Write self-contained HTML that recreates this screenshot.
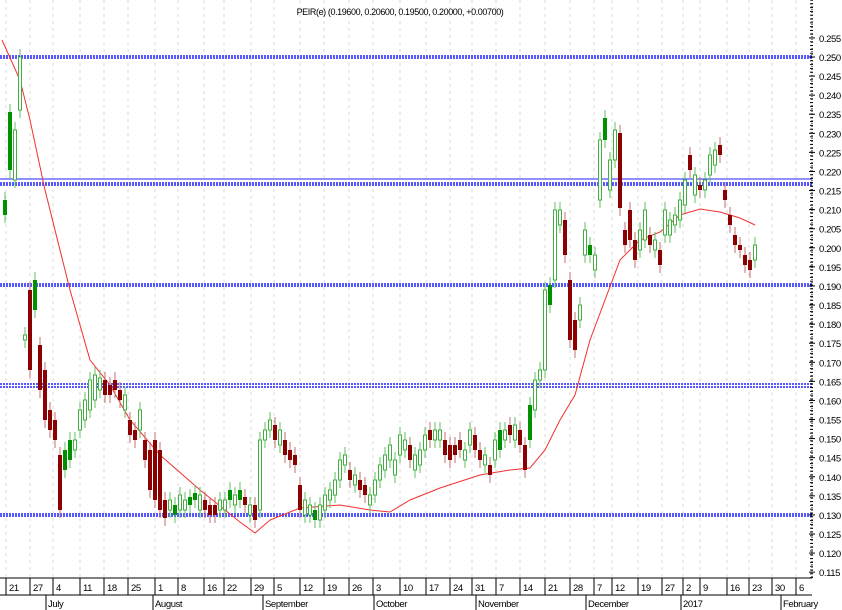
<!DOCTYPE html>
<html><head><meta charset="utf-8"><style>
html,body{margin:0;padding:0;background:#fff;width:842px;height:610px;overflow:hidden}
svg{display:block}
text{font-family:"Liberation Sans",sans-serif;font-size:9.5px;letter-spacing:-0.4px;fill:#000}
</style></head><body>
<svg id="s" width="842" height="610" viewBox="0 0 842 610" xmlns="http://www.w3.org/2000/svg">
<rect width="842" height="610" fill="#fff"/>
<g id="grid"></g>
<g id="hl"></g>
<polyline fill="none" stroke="#f23030" stroke-width="1" points="2,40 20,80 30,120 45,190 60,250 70,290 90,360 110,385 130,420 160,455 200,490 240,522 255,533 270,520 300,508 340,505 370,510 390,512 410,500 440,488 480,475 510,470 530,468 545,450 560,420 575,395 590,340 605,300 620,260 640,240 660,232 680,215 700,209 720,212 740,218 755,225"/>
<g id="c"></g>
<g id="ax"></g>
<text x="400" y="15" text-anchor="middle" style="font-size:9px">PEIR(e) (0.19600, 0.20600, 0.19500, 0.20000, +0.00700)</text>
</svg>
<script>
var NS="http://www.w3.org/2000/svg";
function el(p,n,a,t){var e=document.createElementNS(NS,n);for(var k in a)e.setAttribute(k,a[k]);if(t!==undefined)e.textContent=t;document.getElementById(p).appendChild(e);return e;}
var ticks=[[6,"21"],[30,"27"],[53,"4"],[80,"11"],[104,"18"],[128,"25"],[155,"1"],[178,"8"],[204,"16"],[224,"22"],[251,"29"],[274,"5"],[300,"12"],[324,"19"],[349,"26"],[373,"3"],[400,"10"],[426,"17"],[450,"24"],[472,"31"],[496,"7"],[520,"14"],[545,"21"],[570,"28"],[594,"7"],[612,"12"],[638,"19"],[662,"27"],[683,"2"],[700,"9"],[727,"16"],[749,"23"],[772,"30"],[796,"6"]];
ticks.forEach(function(t){el("grid","line",{x1:t[0],y1:0,x2:t[0],y2:578,stroke:"#d8d8d8","stroke-dasharray":"3,4"});
el("ax","line",{x1:t[0],y1:578,x2:t[0],y2:595,stroke:"#000"});
el("ax","text",{x:t[0]+3,y:591},t[1]);});
el("ax","line",{x1:0,y1:578,x2:812,y2:578,stroke:"#000"});
el("ax","line",{x1:0,y1:595,x2:812,y2:595,stroke:"#000"});
[[48,"July"],[155,"August"],[265,"September"],[376,"October"],[478,"November"],[588,"December"],[683,"2017"],[783,"February"]].forEach(function(m){el("ax","line",{x1:m[0]-2,y1:595,x2:m[0]-2,y2:610,stroke:"#000"});el("ax","text",{x:m[0],y:607},m[1]);});
el("ax","line",{x1:812,y1:0,x2:812,y2:578,stroke:"#000","stroke-dasharray":"1,2"});
for(var i=0;i<=28;i++){var v=0.255-i*0.005,y=57-19.08+i*19.08;el("ax","line",{x1:809,y1:y,x2:815,y2:y,stroke:"#000"});el("ax","text",{x:819,y:y+4},v.toFixed(3));}
for(var y=0;y<578;y+=3.8)el("ax","line",{x1:810,y1:y,x2:813,y2:y,stroke:"#000"});
function hd(y){el("hl","line",{x1:0,y1:y,x2:812,y2:y,stroke:"#2020ff","stroke-width":1.5,"stroke-dasharray":"2,1"});}
hd(56);hd(58);el("hl","line",{x1:0,y1:179,x2:812,y2:179,stroke:"#2020ff"});hd(183);hd(185);
hd(284);hd(286);hd(384);hd(387);hd(514);hd(516);
var d=[[5,200,215,'g'],[10,112,170,'g'],[15,130,180,'h'],[20,57,110,'h'],[25,335,340,'h'],[30,290,370,'r'],[35,280,310,'g'],[40,345,390,'r'],[45,370,420,'r'],[50,410,430,'r'],[55,420,440,'r'],[60,455,510,'r'],[65,450,470,'g'],[70,440,460,'g'],[75,440,450,'h'],[80,410,430,'h'],[85,400,420,'h'],[90,380,410,'h'],[95,375,400,'h'],[100,378,390,'h'],[105,380,395,'r'],[110,385,395,'r'],[115,380,390,'r'],[120,390,400,'r'],[125,395,410,'h'],[130,420,435,'r'],[135,430,440,'r'],[140,410,430,'h'],[145,440,460,'r'],[150,450,490,'r'],[155,440,500,'r'],[160,450,510,'r'],[165,500,518,'r'],[170,500,510,'h'],[175,505,515,'g'],[180,495,510,'h'],[185,500,510,'h'],[190,497,505,'g'],[195,493,500,'g'],[200,495,510,'h'],[205,500,510,'r'],[210,505,515,'r'],[215,505,515,'r'],[220,500,510,'h'],[225,500,510,'h'],[230,490,500,'g'],[235,495,505,'h'],[240,490,500,'g'],[245,497,505,'r'],[250,505,515,'h'],[255,505,520,'r'],[260,440,510,'h'],[265,430,440,'h'],[270,420,430,'h'],[275,425,440,'r'],[280,430,445,'h'],[285,440,455,'r'],[290,450,460,'r'],[295,455,465,'r'],[300,485,510,'r'],[305,500,515,'h'],[310,505,515,'h'],[315,510,520,'g'],[320,505,520,'h'],[325,495,510,'h'],[330,490,500,'h'],[335,480,495,'h'],[340,460,480,'h'],[345,455,465,'h'],[350,470,480,'r'],[355,475,485,'h'],[360,480,490,'r'],[365,485,495,'r'],[370,495,505,'h'],[375,480,495,'h'],[380,465,480,'h'],[385,455,470,'h'],[390,445,460,'h'],[395,460,475,'h'],[400,435,455,'h'],[405,440,450,'h'],[410,445,460,'r'],[415,455,470,'h'],[420,450,465,'h'],[425,435,450,'h'],[430,430,440,'r'],[435,430,440,'h'],[440,430,440,'h'],[445,440,455,'r'],[450,445,460,'r'],[455,445,455,'r'],[460,440,450,'r'],[465,450,460,'h'],[470,430,445,'h'],[475,435,450,'r'],[480,450,460,'r'],[485,455,465,'h'],[490,465,475,'r'],[495,440,460,'h'],[500,430,450,'g'],[505,430,440,'h'],[510,425,435,'r'],[515,425,440,'h'],[520,430,445,'r'],[525,445,470,'r'],[530,405,440,'g'],[535,380,410,'h'],[540,370,380,'h'],[545,290,370,'h'],[550,285,305,'g'],[555,210,280,'h'],[560,210,225,'h'],[565,220,255,'r'],[570,280,340,'r'],[575,320,350,'r'],[580,305,320,'h'],[585,230,255,'h'],[590,245,255,'g'],[595,255,270,'h'],[600,140,200,'h'],[605,118,140,'g'],[610,160,190,'h'],[615,130,160,'h'],[620,133,208,'r'],[625,230,245,'r'],[630,210,240,'r'],[635,240,260,'r'],[640,230,250,'h'],[645,210,240,'h'],[650,235,245,'r'],[655,240,250,'h'],[660,250,265,'r'],[665,210,235,'h'],[670,220,235,'h'],[675,215,225,'h'],[680,200,220,'h'],[685,180,205,'h'],[690,155,170,'r'],[695,175,195,'h'],[700,185,190,'r'],[705,180,190,'h'],[710,155,175,'h'],[715,150,165,'h'],[720,145,155,'r'],[725,190,200,'r'],[730,215,225,'r'],[735,235,245,'r'],[740,245,250,'r'],[745,255,265,'r'],[750,260,270,'r'],[755,245,260,'h']];
d.forEach(function(c){var x=c[0],t=c[1],b=c[2],k=c[3];
var wc=k=='r'?'#c07070':'#60c060';
el("c","line",{x1:x,y1:t-8,x2:x,y2:b+8,stroke:wc});
if(k=='r')el("c","rect",{x:x-2,y:t,width:4,height:b-t,fill:"#8b0000"});
else if(k=='g')el("c","rect",{x:x-2,y:t,width:4,height:b-t,fill:"#009000"});
else el("c","rect",{x:x-1.5,y:t,width:3,height:b-t,fill:"#fff",stroke:"#40b040"});
});
</script>
</body></html>
